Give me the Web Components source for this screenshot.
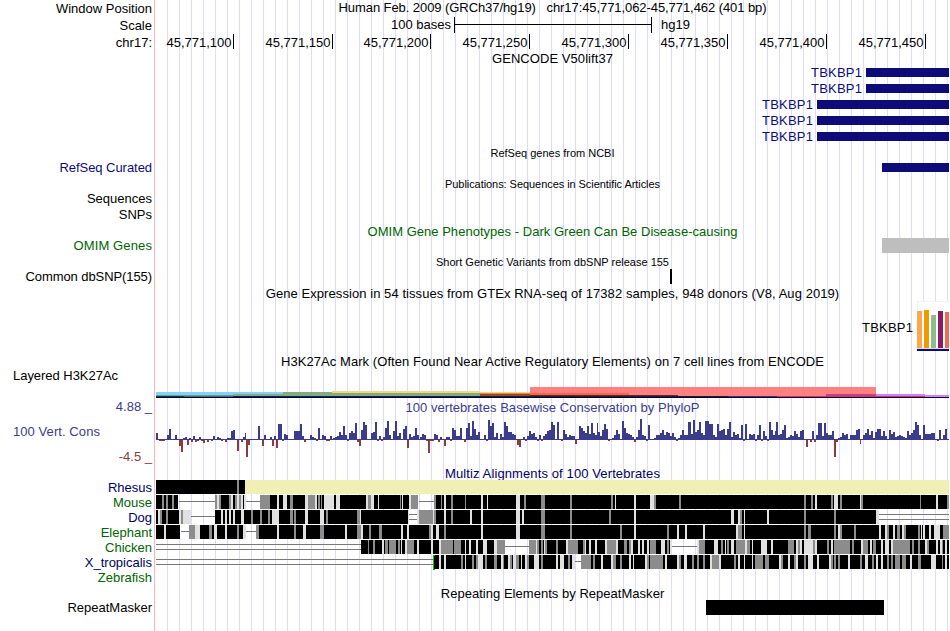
<!DOCTYPE html>
<html lang="en">
<head>
<meta charset="utf-8">
<title>Genome Browser chr17:45,771,062-45,771,462</title>
<style>body{margin:0;background:#fff}</style>
</head>
<body>
<genome-view></genome-view>

<template id="view-tpl">
<style>
:host{display:flex;flex-direction:column;width:949px;height:631px;overflow:hidden;
 font:13px/16px "Liberation Sans",Arial,sans-serif;color:#000;
 background:
  linear-gradient(#ffb4b4,#ffb4b4) 154px 0/1px 100% no-repeat,
  repeating-linear-gradient(90deg,#dcdcff 0 1px,transparent 1px 12px) 167px 0/782px 100% no-repeat}
</style>
<track-row h="17" label="Window Position" heading="Human Feb. 2009 (GRCh37/hg19) &nbsp; chr17:45,771,062-45,771,462 (401 bp)" fit="428" nudge="-1"></track-row>
<track-row h="17" label="Scale"><scale-bar y="17" h="17"></scale-bar></track-row>
<track-row h="17" label="chr17:"><base-ruler y="34" h="17"></base-ruler></track-row>
<track-row h="13" heading="GENCODE V50lift37" fit="121" nudge="1"></track-row>
<track-row h="16"><feature-bar y="64" h="16" x="866" top="68" size="9" name="TBKBP1"></feature-bar></track-row>
<track-row h="16"><feature-bar y="80" h="16" x="866" top="84" size="9" name="TBKBP1"></feature-bar></track-row>
<track-row h="16"><feature-bar y="96" h="16" x="817" top="100" size="9" name="TBKBP1"></feature-bar></track-row>
<track-row h="16"><feature-bar y="112" h="16" x="817" top="116" size="9" name="TBKBP1"></feature-bar></track-row>
<track-row h="16"><feature-bar y="128" h="16" x="817" top="132" size="9" name="TBKBP1"></feature-bar></track-row>
<track-row h="15" small heading="RefSeq genes from NCBI" fit="124" nudge="2"></track-row>
<track-row h="17" label="RefSeq Curated" labelfit="92.5" color="#0c0c78"><feature-bar y="159" h="17" x="882" top="163" size="9"></feature-bar></track-row>
<track-row h="15" small heading="Publications: Sequences in Scientific Articles" fit="215" nudge="1"></track-row>
<track-row h="16" label="Sequences" lift="1"></track-row>
<track-row h="16" label="SNPs" lift="1"></track-row>
<track-row h="15" heading="OMIM Gene Phenotypes - Dark Green Can Be Disease-causing" color="#006400" fit="370" nudge="1"></track-row>
<track-row h="15" label="OMIM Genes" labelfit="78.5" color="#006400"><feature-bar y="238" h="15" x="882" top="238" size="15" fill="#bebebe"></feature-bar></track-row>
<track-row h="16" small heading="Short Genetic Variants from dbSNP release 155" fit="233" nudge="1"></track-row>
<track-row h="16" label="Common dbSNP(155)" labelfit="126.5" lift="1"><feature-bar y="269" h="16" x="670" end="672" top="269" size="15" fill="#000"></feature-bar></track-row>
<track-row h="16" heading="Gene Expression in 54 tissues from GTEx RNA-seq of 17382 samples, 948 donors (V8, Aug 2019)" fit="573.5"></track-row>
<track-row h="53" label=""><expression-chart y="301" h="53"></expression-chart></track-row>
<track-row h="14" heading="H3K27Ac Mark (Often Found Near Active Regulatory Elements) on 7 cell lines from ENCODE" fit="543"></track-row>
<track-row h="31" label="Layered H3K27Ac" labelfit="105" left top="0"><histone-overlay y="368" h="31"></histone-overlay></track-row>
<track-row h="17" scale="4.88 _" lift="1" color="#3c3c8c" heading="100 vertebrates Basewise Conservation by PhyloP" fit="294"></track-row>
<track-row h="51" label="100 Vert. Cons" labelfit="87" left color="#3c3c8c" top="8" lift="3" low="-4.5 _"><conservation-plot y="416" h="51"></conservation-plot></track-row>
<track-row h="13" heading="Multiz Alignments of 100 Vertebrates" color="#000064" fit="215"></track-row>
<track-row h="15" label="Rhesus" color="#000064"><alignment-strip species="rhesus" y="480"></alignment-strip></track-row>
<track-row h="15" label="Mouse" color="#006400"><alignment-strip species="mouse" y="495"></alignment-strip></track-row>
<track-row h="15" label="Dog" color="#000064"><alignment-strip species="dog" y="510"></alignment-strip></track-row>
<track-row h="15" label="Elephant" color="#006400"><alignment-strip species="elephant" y="525"></alignment-strip></track-row>
<track-row h="15" label="Chicken" color="#006400"><alignment-strip species="chicken" y="540"></alignment-strip></track-row>
<track-row h="15" label="X_tropicalis" color="#000064"><alignment-strip species="frog" y="555"></alignment-strip></track-row>
<track-row h="15" label="Zebrafish" color="#006400"></track-row>
<track-row h="15" heading="Repeating Elements by RepeatMasker" fit="223.5" nudge="1"></track-row>
<track-row h="15" label="RepeatMasker"><feature-bar y="600" h="15" x="706" end="884" top="600" size="15" fill="#000"></feature-bar></track-row>
</template>

<script>
const LEFT = 156, RIGHT = 949;
const rect = (x, y, w, h, c) => `<rect x="${x}" y="${y}" width="${w}" height="${h}" fill="${c}"/>`;

/* One browser line: a label column, then a data column with a heading or slotted graphics. */
class TrackRow extends HTMLElement {
  connectedCallback() {
    const a = n => this.getAttribute(n);
    const h = +a('h'), left = this.hasAttribute('left'), small = this.hasAttribute('small'), nudge = +a('nudge') || 0;
    this.attachShadow({mode: 'open'}).innerHTML = `<style>
      :host{display:grid;grid-template-columns:152px 793px;column-gap:4px;height:${h}px;flex:none;color:${a('color') || 'inherit'}}
      .label{display:flex;flex-direction:column;justify-content:${left ? 'space-between' : 'center'};
        align-items:flex-end;white-space:nowrap;height:${h}px;box-sizing:border-box;
        padding-bottom:${left ? +a('lift') : 2 * a('lift')}px}
      .label span{line-height:15px}
      .label .left{align-self:flex-start;margin-left:13px;padding-top:${a('top') || 0}px}
      .label .low{color:#8c3c3c}
      .data{height:${h}px;min-width:0}
      .head{display:flex;align-items:center;justify-content:center;height:${h}px;white-space:pre;
        padding-top:${Math.max(0, nudge * 2)}px;padding-bottom:${Math.max(0, -nudge * 2)}px;box-sizing:border-box;
        font-size:${small ? 11 : 13}px;line-height:15px}
      </style>
      <div class="label">${a('scale') ? `<span>${a('scale')}</span>` : ''}${a('label') ? `<span class="name ${left ? 'left' : ''}">${a('label')}</span>` : ''}${a('low') ? `<span class="low">${a('low')}</span>` : ''}</div>
      <div class="data">${a('heading') ? `<div class="head"><span>${a('heading')}</span></div>` : '<slot></slot>'}</div>`;
    this.fit('.head span', a('fit'));
    this.fit('.name', a('labelfit'));
  }
  /* Spread or tighten the letters so that the text is `width` pixels long. */
  fit(selector, width) {
    const el = this.shadowRoot.querySelector(selector);
    if (!el || !width) return;
    el.style.letterSpacing = (width - el.getBoundingClientRect().width) / el.textContent.length + 'px';
  }
}

/* Base for graphics: an SVG whose user units are view pixels. */
class TrackGraphic extends HTMLElement {
  connectedCallback() {
    const y = +this.getAttribute('y'), h = +(this.getAttribute('h') || 15);
    this.attachShadow({mode: 'open'}).innerHTML = `<style>:host{display:block;height:${h}px}
      svg{display:block;overflow:visible;shape-rendering:crispEdges}
      text{font:13px "Liberation Sans",Arial,sans-serif}</style>
      <svg width="793" height="${h}" viewBox="${LEFT} ${y} 793 ${h}">${this.draw(y, h)}</svg>`;
  }
}

class ScaleBar extends TrackGraphic {
  draw() {
    return rect(454, 17, 1, 16, '#000') + rect(651, 17, 1, 16, '#000') + rect(454, 24, 198, 1, '#000') +
      `<text x="391" y="29" textLength="60">100 bases</text><text x="661" y="29">hg19</text>`;
  }
}

class BaseRuler extends TrackGraphic {
  draw() {
    return [[233,100],[332,150],[430,200],[529,250],[628,300],[727,350],[826,400],[925,450]]
      .map(([x, n]) => rect(x, 34, 1, 15, '#000') + `<text x="${x - 66.5}" y="47" textLength="65">45,771,${n}</text>`).join('');
  }
}

class FeatureBar extends TrackGraphic {
  draw() {
    const a = n => this.getAttribute(n), fill = a('fill') || '#0c0c78', x = +a('x');
    return rect(x, a('top'), (+a('end') || RIGHT) - x, a('size'), fill) +
      (a('name') ? `<text x="${x - 55}" y="${+a('top') + 9}" textLength="51" fill="${fill}">${a('name')}</text>` : '');
  }
}

class ExpressionChart extends TrackGraphic {
  draw() {
    return rect(917, 301, 32, 47, '#fff') + rect(917, 301, 32, 1, '#f2f2f2') + rect(917, 301, 1, 10, '#f2f2f2') +
      rect(917, 348, 32, 1, '#ddd') + rect(917, 349, 32, 2, '#0c0c78') +
      rect(917, 311, 5, 37, '#ffa54f') + rect(924, 310, 5, 38, '#ee9a00') + rect(931, 315, 5, 33, '#8fbc8f') +
      rect(938, 311, 5, 37, '#8b1c62') + rect(945, 312, 4, 36, '#ee6a50') +
      `<text x="862" y="332" textLength="51">TBKBP1</text>`;
  }
}

class HistoneOverlay extends TrackGraphic {
  draw() {
    return [
      [156,392,127,3,'#80d2ff'],[156,395,77,1,'#66a08c'],[184,396,49,1,'#506478'],[233,394,50,2,'#80ac80'],
      [283,392,49,4,'#80ac80'],[332,391,148,2,'#ffd280'],[332,393,148,3,'#80ac80'],
      [156,396,28,1,'#0c3c50'],[233,396,247,1,'#102060'],
      [480,392,50,1,'#ffd280'],[480,393,50,1,'#f08040'],[480,394,50,2,'#8c5030'],
      [530,387,346,9,'#ff8080'],[530,393,99,2,'#ff6440'],[530,395,148,1,'#5c2834'],[480,396,248,1,'#1c1c3c'],
      [728,396,49,1,'#3c3082'],[777,396,148,1,'#c83278'],[826,394,50,2,'#c83c82'],
      [876,394,49,2,'#d280ff'],[925,395,24,2,'#d280ff'],[156,397,793,1,'#080828']
    ].map(r => rect(...r)).join('');
  }
}

/* Score runs: start pixel, then one height per 2px base. */
const SCORES = [
 [156,[7]],
 [159,[-1,-1,-1,1,5,11,1,1,5,1,-6,-12,2,3,-5,2,-2,4,-2,-1,3,-1,-3,1,-2,1,-1,4,1,3,2,-1,1,-2,2,2,9,10,1,-11,1,-2,3]],
 [245,[7]],
 [246,[-17,-5,1,1,1,1,14,1,-6,5,1,1,3,-6,4,-8,16,16,-1,6,5,1,1,1,9,9,9,16,4,-2,1,1,5,3,2,-1,12,1,5,4,-1,-1,4,1]],
 [333,[2,3,4,8,5,14,5,-1,7,9,7,17,-2,-6,10,18,15,1,1,7,8,18,-1,4,-1,3,12,19,5,1,9,19,4,7,1,11,14,-8,6,3,4,12,5]],
 [420,[3,6,5,-1,-13,-1,-1,6,5,-2,3,1,-6,3,3,-1,12,10,4,4,12,1,-2,12,17,4,19,11,5,8,1,1,5,-1,20,14,17,3,7,1,6,3,18,14,8,8,6,5,1]],
 [517,[-5,-7,1,3]],
 [525,[-1,4,9,6,7,3,-1,5,-1,4,6,9,10,18,15,1,18,1,-1,10,6,3,5,4,4,-4,1,14,12,9,7,14,6,17,7,5]],
 [597,[17]],
 [598,[8,4,10,16,11,-1,1,2,5,10,6,1,19,12,7,6,5,3,-2,3,10,21,5,4,-1,15,1,1,2,5,5,7,10,5,8,7,4,7,3,-1,2,5,10,5,5,18]],
 [690,[18]],[691,[6,20,8,10,18,7,5,19,19,16,16,5,3,16,9,10,11,5,11,18,3,8,5,6,2,15,-1,16,1,6,5,6,-1,5,15,-1,9,4,-1,18,10,5,9]],
 [776,[18,5,6,10,15,2,3,5,4,9,6,3,9,10,1,-7,1,-2,9,-2,5,17,17,4,17,7,5,5,9,-17,-2,2,3,7,5,6,1,5,5,5,10,11]],
 [860,[-4]],[861,[1,5,7,11,5,9,2,8,11,11,4,9,4,1,10,6,8,3,4,5,4,3,2,9,5,7,10,18,15,5,1,15,6,6,6,7,7,1,-1,10,1,5,11,1,-6]]
];
class ConservationPlot extends TrackGraphic {
  draw() {
    return rect(156, 439, 793, 1, '#3c3c8c') + SCORES.map(([x0, hs], i) => hs.map((h, k) => {
      const x = x0 + 2 * k, stop = SCORES[i + 1] ? SCORES[i + 1][0] : RIGHT;
      const w = Math.min(2, stop - x);
      if (w <= 0) return '';
      return h > 0 ? rect(x, 440 - h, w, h, '#3c3c8c') : rect(x, 440, w, -h, '#8c3c3c');
    }).join('')).join('');
  }
}

/* solid: aligned spans; mid/light: weaker-scoring columns as "x,width"; one/two: single and double gap lines. */
const ALIGN = {
 rhesus: {solid:'156,89', mid:'237,2'},
 mouse: {solid:'156,22 215,31 260,158 434,515', one:'179,36 246,14 419,15',
  mid:'162,2 166,2 172,2 215,2 219,2 229,2 235,2 239,2 260,10 290,3 308,7 318,2 321,1 368,3 400,1 411,7 434,2 441,1 451,2 465,1 524,2 541,4 570,2 611,2 654,2 679,2 804,2 811,2 831,2 840,2 861,2 920,1 947,2',
  light:'217,2 231,2 237,2 241,2 244,2 277,2 283,4 305,3 315,2 324,10 336,4 366,2 371,3 378,1 402,1 409,2 444,2 481,2 487,1 516,4 615,1 634,2 650,4 815,2 834,4 860,1 936,2'},
 dog: {solid:'156,35 215,194 417,462', one:'191,24', two:'409,8 879,70',
  mid:'160,2 166,2 181,2 251,2 260,2 268,2 290,3 294,2 326,2 357,3 419,14 434,2 451,2 541,4 570,2 609,2 740,2 804,2 834,2',
  light:'158,2 179,2 183,8 221,2 225,2 229,2 233,2 241,3 272,7 305,3 320,4 360,1 408,1 417,2 433,1 444,2 470,2 481,2 516,4 522,2 634,2 731,3 738,2 744,1 767,2 876,3'},
 elephant: {solid:'156,24 189,57 256,693', one:'181,8 246,10',
  mid:'189,6 209,3 237,2 256,3 294,2 320,4 357,4 369,2 379,3 429,2 444,2 541,4 570,2 620,2 667,2 738,4 804,2 808,3 834,2 840,2 854,2 887,2 897,3 904,2 918,2 943,6',
  light:'164,2 195,5 214,3 225,2 243,3 277,2 303,3 345,2 361,2 401,2 407,2 431,2 436,3 481,2 516,4 634,2 677,2 685,2 703,2 736,2 744,1 838,2 879,2 885,2 893,2 902,2 921,1 923,2 929,2 934,6'},
 chicken: {solid:'361,144 529,143 697,252', one:'505,24 672,25', two:'156,205',
  mid:'368,1 373,2 385,3 389,7 398,2 407,7 441,12 454,7 497,8 529,7 537,2 541,2 545,2 556,2 568,10 583,2 607,9 624,3 629,2 650,6 667,2 699,6 721,2 727,2 736,9 747,3 788,6 798,2 813,2 827,2 834,16 852,2 863,5 873,3 893,17 912,2 918,2 927,2 942,1',
  light:'382,2 401,1 405,2 417,2 431,2 439,2 465,1 469,2 476,2 483,4 494,3 536,1 544,1 566,2 585,1 589,2 595,2 605,2 616,2 631,2 638,2 642,2 647,2 661,4 670,2 697,2 714,4 725,1 731,3 745,2 752,1 761,6 771,2 796,2 800,2 804,9 815,2 831,2 861,2 870,2 881,2 885,4 891,2 925,2 936,2 940,2 945,2'},
 frog: {solid:'434,141 581,368', one:'575,6', two:'156,277',
  mid:'461,2 472,2 476,2 485,2 494,3 503,1 510,2 516,3 527,2 541,2 568,2 581,10 593,2 613,3 620,2 647,2 650,13 679,2 692,2 697,2 703,2 712,7 734,2 755,8 765,4 781,2 794,2 804,2 831,2 834,2 838,2 860,2 872,2 887,2 891,2 895,5 902,4 918,3 942,1',
  light:'439,2 444,2 465,1 478,5 501,2 508,2 513,3 521,1 525,2 534,5 556,2 560,4 572,3 601,2 611,2 629,2 633,1 645,2 665,2 677,2 684,3 710,2 719,2 738,2 744,1 752,1 779,2 788,2 796,2 808,5 817,2 829,2 848,2 865,3 876,2 881,2 910,2 931,5 945,2'}
};
class AlignmentStrip extends TrackGraphic {
  draw(y) {
    const s = this.getAttribute('species'), d = ALIGN[s];
    const spans = (list, dy, h, c) => (list || '').split(' ').filter(Boolean).map(t => {
      const [x, w] = t.split(',').map(Number);
      return rect(x, y + dy, w, h, c);
    }).join('');
    return (s === 'rhesus' ? rect(245, y, 704, 14, '#f0f0b4') : '') +
      spans(d.solid, 0, 14, '#000') + spans(d.mid, 0, 14, '#8c8c8c') + spans(d.light, 0, 14, '#e1e1e1') +
      spans(d.one, 6, 1, '#787878') + spans(d.two, 4, 1, '#787878') + spans(d.two, 9, 1, '#787878') +
      (s === 'frog' ? rect(433, y, 1, 15, '#00c800') + rect(433, y, 2, 1, '#00c800') + rect(433, y + 14, 2, 1, '#00c800') : '');
  }
}

class GenomeView extends HTMLElement {
  connectedCallback() {
    this.attachShadow({mode: 'open'}).append(document.getElementById('view-tpl').content.cloneNode(true));
  }
}

customElements.define('track-row', TrackRow);
customElements.define('scale-bar', ScaleBar);
customElements.define('base-ruler', BaseRuler);
customElements.define('feature-bar', FeatureBar);
customElements.define('expression-chart', ExpressionChart);
customElements.define('histone-overlay', HistoneOverlay);
customElements.define('conservation-plot', ConservationPlot);
customElements.define('alignment-strip', AlignmentStrip);
customElements.define('genome-view', GenomeView);
</script>
</body>
</html>
